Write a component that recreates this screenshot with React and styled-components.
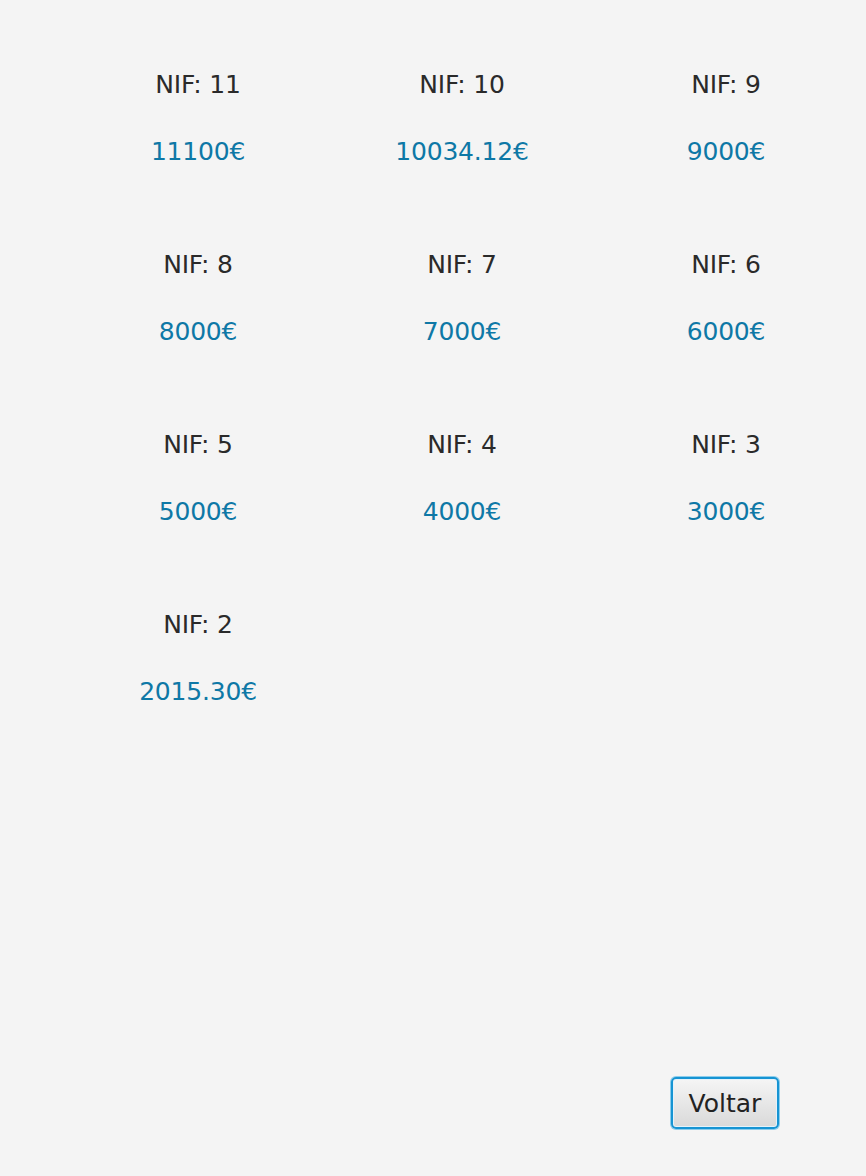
import styled, { createGlobalStyle } from 'styled-components';

const entries = [
	{ nif: 11, value: '11100€' },
	{ nif: 10, value: '10034.12€' },
	{ nif: 9, value: '9000€' },
	{ nif: 8, value: '8000€' },
	{ nif: 7, value: '7000€' },
	{ nif: 6, value: '6000€' },
	{ nif: 5, value: '5000€' },
	{ nif: 4, value: '4000€' },
	{ nif: 3, value: '3000€' },
	{ nif: 2, value: '2015.30€' },
];

export default function App() {
	return (
		<>
			<GlobalStyle />
			<StyledPage>
				<StyledGrid>
					{entries.map(entry => (
						<StyledCell key={entry.nif}>
							<StyledNif>NIF: {entry.nif}</StyledNif>
							<StyledValue>{entry.value}</StyledValue>
						</StyledCell>
					))}
				</StyledGrid>
				<StyledFooter>
					<StyledButton type="button">Voltar</StyledButton>
				</StyledFooter>
			</StyledPage>
		</>
	);
}
/* --------------------Styling --------------------------------*/
const GlobalStyle = createGlobalStyle`
	html, body {
		margin: 0;
		padding: 0;
		background: #f4f4f4;
	}
	body {
		font-family: 'DejaVu Sans', 'Liberation Sans', sans-serif;
	}
`;

const StyledPage = styled.div`
	display: flex;
	flex-direction: column;
	min-height: 1176px;
	box-sizing: border-box;
`;

const StyledGrid = styled.div`
	display: grid;
	grid-template-columns: repeat(3, 264px);
	row-gap: 83px;
	padding: 70px 0 0 66px;
`;

const StyledCell = styled.div`
	display: flex;
	flex-direction: column;
	align-items: center;
	gap: 37px;
`;

const StyledNif = styled.div`
	color: #2a2a2a;
	font-size: 25px;
	line-height: 30px;
	letter-spacing: -0.2px;
`;

const StyledValue = styled.div`
	color: #0e78a6;
	font-size: 25px;
	line-height: 30px;
	letter-spacing: -0.2px;
`;

const StyledFooter = styled.div`
	display: flex;
	justify-content: flex-end;
	margin-top: auto;
	padding: 0 87px 47px 0;
`;

const StyledButton = styled.button`
	width: 108px;
	height: 52px;
	padding: 0;
	border: 2px solid #1694d3;
	border-radius: 5px;
	background: linear-gradient(#f5f5f5, #d9d9d9);
	box-shadow: 0 0 0 1px #8ccdec, inset 0 0 0 1px #e4f2fa;
	color: #222;
	font-family: 'DejaVu Sans', 'Liberation Sans', sans-serif;
	font-size: 25px;
	cursor: pointer;
`;
